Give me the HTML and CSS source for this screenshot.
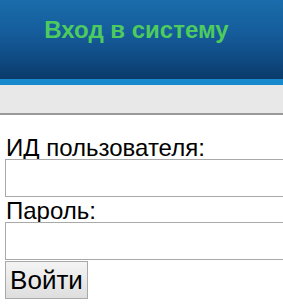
FILE: index.html
```html
<!DOCTYPE html>
<html lang="ru">
<head>
<meta charset="utf-8">
<title>Вход в систему</title>
<link rel="stylesheet" href="styles.css">
</head>
<body>
<header class="header">
  <h1 class="title">Вход в систему</h1>
</header>
<nav class="menu"></nav>
<form class="login">
  <label class="label" for="uid">ИД пользователя:</label>
  <input class="field" id="uid" type="text">
  <label class="label label-pass" for="pwd">Пароль:</label>
  <input class="field" id="pwd" type="password">
  <button class="submit" type="button">Войти</button>
</form>
</body>
</html>
```
FILE: styles.css
```css
html, body {
  margin: 0;
  padding: 0;
  background: #fff;
  overflow: hidden;
  font-family: "Liberation Sans", Arial, sans-serif;
}
.header {
  height: 79px;
  border-bottom: 6px solid #1889cc;
  background: linear-gradient(to bottom, #1a6caa 0%, #155d9c 40%, #0f4a82 75%, #0b3b69 100%);
  display: flex;
  align-items: flex-start;
  justify-content: center;
  padding-right: 10px;
}
.title {
  margin: 16px 0 0;
  font-size: 24px;
  line-height: 28px;
  font-weight: bold;
  color: #4ecb5e;
}
.menu {
  height: 28px;
  background: #e8e8e8;
  border-bottom: 2px solid #999;
}
.login {
  display: flex;
  flex-direction: column;
  align-items: flex-start;
  padding: 21px 0 0 5px;
}
.label {
  font-size: 24px;
  line-height: 23px;
  color: #000;
  padding-left: 1px;
}
.label-pass {
  margin-top: 2px;
}
.field {
  box-sizing: border-box;
  width: 278px;
  height: 38px;
  margin: 0;
  border: 1px solid #a9a9a9;
  border-right: 0;
  background: #fff;
  font-size: 20px;
}
.submit {
  box-sizing: border-box;
  margin-top: 1px;
  width: 83px;
  height: 38px;
  padding: 0;
  font-family: "Liberation Sans", Arial, sans-serif;
  font-size: 26px;
  color: #000;
  border: 1px solid #a9a9a9;
  border-radius: 0;
  background: linear-gradient(to bottom, #f4f4f4, #dedede);
}
```
